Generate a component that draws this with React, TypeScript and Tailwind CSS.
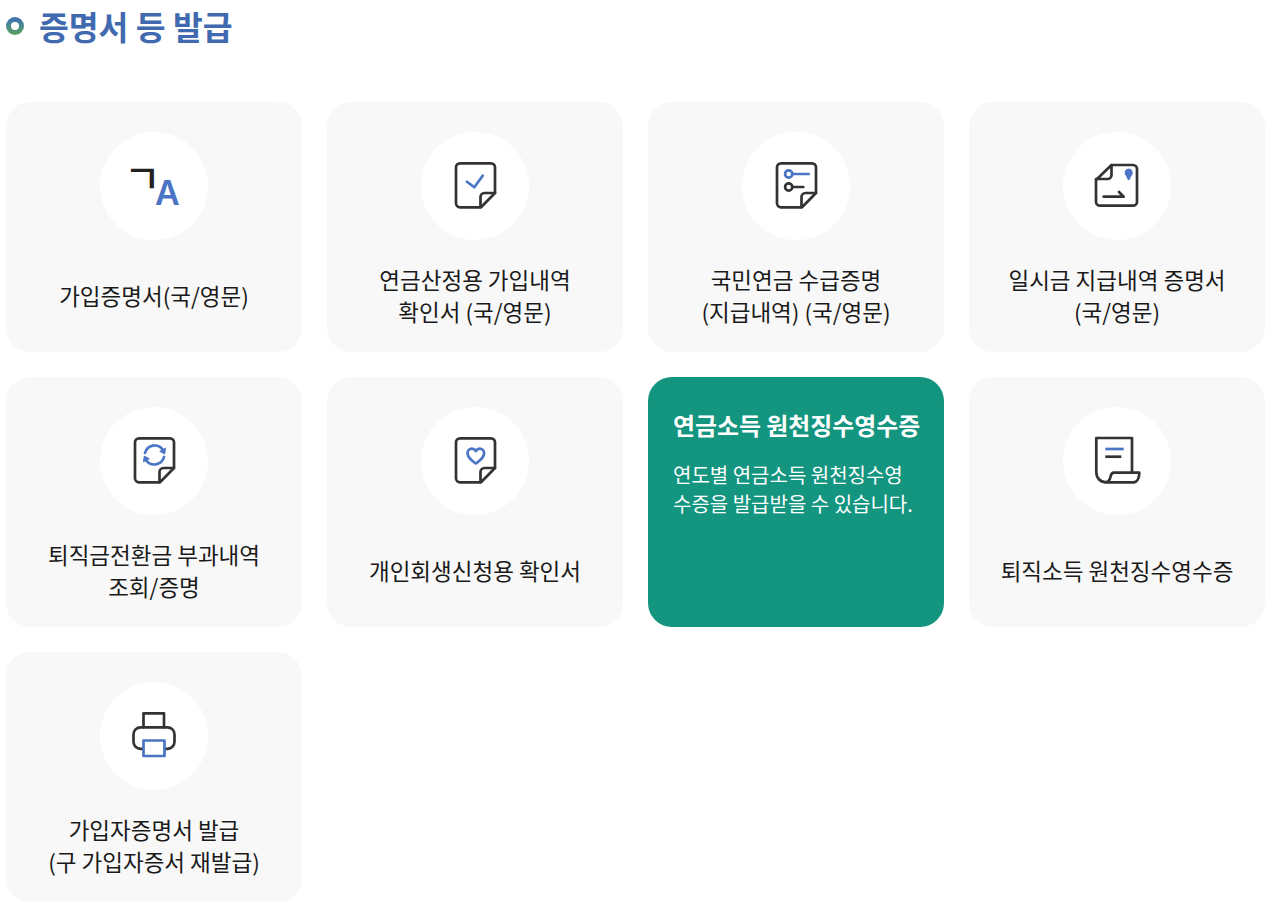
const BLUE = "#4a74c4"
const DARK = "#333"
const SW = 2.7

const FONT = '"Noto Sans CJK KR", "Noto Sans", sans-serif'

// Sticky-note outline shared by most of the document icons
function NoteOutline() {
  return (
    <>
      <path
        d="M39 31.3H70a4 4 0 0 1 4 4V61L60 75.3H39a4 4 0 0 1-4-4V35.3a4 4 0 0 1 4-4Z"
        stroke={DARK}
        strokeWidth={SW}
        strokeLinejoin="round"
      />
      <path d="M59.5 75V65a4 4 0 0 1 4-4H74" stroke={DARK} strokeWidth={SW} />
    </>
  )
}

function Icon({ children }: { children: React.ReactNode }) {
  return (
    <svg width="108" height="108" viewBox="0 0 108 108" fill="none" strokeLinecap="round">
      {children}
    </svg>
  )
}

const icons: Record<string, React.ReactNode> = {
  lang: (
    <Icon>
      <text x="24" y="61" fontSize="40" fontWeight="500" fill="#222" fontFamily={FONT}>
        ㄱ
      </text>
      <text x="55" y="73" fontSize="34" fontWeight="600" fill={BLUE} fontFamily="Inter, sans-serif">
        A
      </text>
    </Icon>
  ),
  check: (
    <Icon>
      <NoteOutline />
      <path d="M46 49.7l7.3 5.6 8.4-11.6" stroke={BLUE} strokeWidth={SW} strokeLinejoin="round" />
    </Icon>
  ),
  list: (
    <Icon>
      <NoteOutline />
      <circle cx="46.7" cy="42" r="3.6" stroke={BLUE} strokeWidth={SW} />
      <path d="M50.5 42H66.7" stroke={BLUE} strokeWidth={SW} />
      <circle cx="46.7" cy="55" r="3.6" stroke={DARK} strokeWidth={SW} />
      <path d="M50.5 55H61.3" stroke={DARK} strokeWidth={SW} />
    </Icon>
  ),
  seal: (
    <Icon>
      <path
        d="M48.5 33H70a4 4 0 0 1 4 4V69.7a4 4 0 0 1-4 4H37a4 4 0 0 1-4-4V48Z"
        stroke={DARK}
        strokeWidth={SW}
        strokeLinejoin="round"
      />
      <path d="M48.5 33V43a4 4 0 0 1-4 4H33" stroke={DARK} strokeWidth={SW} />
      <path d="M65.7 36.5a4.2 4.2 0 0 1 2.6 7.4L66.5 48h-1.6l-1.8-4.1a4.2 4.2 0 0 1 2.6-7.4Z" fill={BLUE} />
      <path d="M40.7 64.7H60.7L56 60" stroke={DARK} strokeWidth={SW} strokeLinejoin="round" />
    </Icon>
  ),
  refresh: (
    <Icon>
      <NoteOutline />
      <path d="M45 46a10 10 0 0 1 18-3" stroke={BLUE} strokeWidth={SW} />
      <path d="M64 50a10 10 0 0 1-18 3" stroke={BLUE} strokeWidth={SW} />
      <path d="M65.5 41.5l-.8 5.4-4.6-2.4Z" fill={BLUE} stroke={BLUE} strokeWidth="1" strokeLinejoin="round" />
      <path d="M43.5 54.5l.8-5.4 4.6 2.4Z" fill={BLUE} stroke={BLUE} strokeWidth="1" strokeLinejoin="round" />
    </Icon>
  ),
  heart: (
    <Icon>
      <NoteOutline />
      <path
        d="M54.8 56.5c-2.2-1.5-8.3-5.4-8.3-10.2 0-2.8 2.1-4.6 4.4-4.6 1.7 0 3 .8 3.9 2.3.9-1.5 2.2-2.3 3.9-2.3 2.3 0 4.4 1.8 4.4 4.6 0 4.8-6.1 8.7-8.3 10.2Z"
        stroke={BLUE}
        strokeWidth={SW}
        strokeLinejoin="round"
      />
    </Icon>
  ),
  receipt: (
    <Icon>
      <path d="M69 65V31H33.3V65c0 6 4 10 9 10" stroke={DARK} strokeWidth={SW} strokeLinejoin="round" />
      <path
        d="M42 75.3c4 0 5-3 5.5-5.5.5-2.6 1.5-4.1 3.5-4.1H76.3c0 5-2 9.6-6 9.6H42Z"
        stroke={DARK}
        strokeWidth={SW}
        strokeLinejoin="round"
      />
      <path d="M42.3 42H60.7" stroke={BLUE} strokeWidth={SW} strokeLinecap="butt" />
      <path d="M42.3 49.7H58.3" stroke={DARK} strokeWidth={SW} strokeLinecap="butt" />
    </Icon>
  ),
  printer: (
    <Icon>
      <path d="M43.5 45.3V31.3H64V45.3" stroke={DARK} strokeWidth={SW} strokeLinejoin="round" />
      <rect x="33.5" y="45.3" width="41" height="21.5" rx="7" stroke={DARK} strokeWidth={SW} />
      <rect x="43.5" y="58.5" width="21" height="15.5" fill="#fff" stroke={BLUE} strokeWidth={SW} strokeLinejoin="round" />
    </Icon>
  ),
}

const cards = [
  { icon: "lang", lines: ["가입증명서(국/영문)"] },
  { icon: "check", lines: ["연금산정용 가입내역", "확인서 (국/영문)"] },
  { icon: "list", lines: ["국민연금 수급증명", "(지급내역) (국/영문)"] },
  { icon: "seal", lines: ["일시금 지급내역 증명서", "(국/영문)"] },
  { icon: "refresh", lines: ["퇴직금전환금 부과내역", "조회/증명"] },
  { icon: "heart", lines: ["개인회생신청용 확인서"] },
  {
    active: true,
    title: "연금소득 원천징수영수증",
    lines: ["연도별 연금소득 원천징수영", "수증을 발급받을 수 있습니다."],
  },
  { icon: "receipt", lines: ["퇴직소득 원천징수영수증"] },
  { icon: "printer", lines: ["가입자증명서 발급", "(구 가입자증서 재발급)"] },
]

export default function App() {
  return (
    <div className="min-h-[920px] bg-white pl-[6px]" style={{ fontFamily: FONT }}>
      <div className="flex h-[102px] items-start">
        <h2 className="flex h-[52px] items-center gap-[15px] text-[32.4px] leading-none font-bold text-[#4169b0]">
          <span className="flex h-[18px] w-[18px] items-center justify-center rounded-full bg-gradient-to-b from-[#3f6db5] to-[#5ba35a]">
            <span className="h-[8px] w-[8px] rounded-full bg-white" />
          </span>
          증명서 등 발급
        </h2>
      </div>

      <div className="grid w-[1259px] grid-cols-4 gap-[25px]">
        {cards.map((card, i) =>
          card.active ? (
            <div key={i} className="flex h-[250px] flex-col rounded-3xl bg-[#13957f] px-[25px] pt-[30px] text-white">
              <h3 className="text-[23.9px] leading-[36px] font-semibold whitespace-nowrap">{card.title}</h3>
              <p className="mt-[17px] text-[20px] leading-[29px]">
                {card.lines.map((line) => (
                  <span key={line} className="block whitespace-nowrap">
                    {line}
                  </span>
                ))}
              </p>
            </div>
          ) : (
            <div key={i} className="flex h-[250px] flex-col items-center rounded-3xl bg-[#f8f8f8] pt-[30px]">
              <div className="h-[108px] w-[108px] rounded-full bg-white">{icons[card.icon!]}</div>
              <p className="flex flex-1 flex-col justify-center pb-[2px] text-center text-[22.5px] leading-[32px] text-[#1a1a1a]">
                {card.lines.map((line) => (
                  <span key={line} className="block whitespace-nowrap">
                    {line}
                  </span>
                ))}
              </p>
            </div>
          ),
        )}
      </div>
    </div>
  )
}
